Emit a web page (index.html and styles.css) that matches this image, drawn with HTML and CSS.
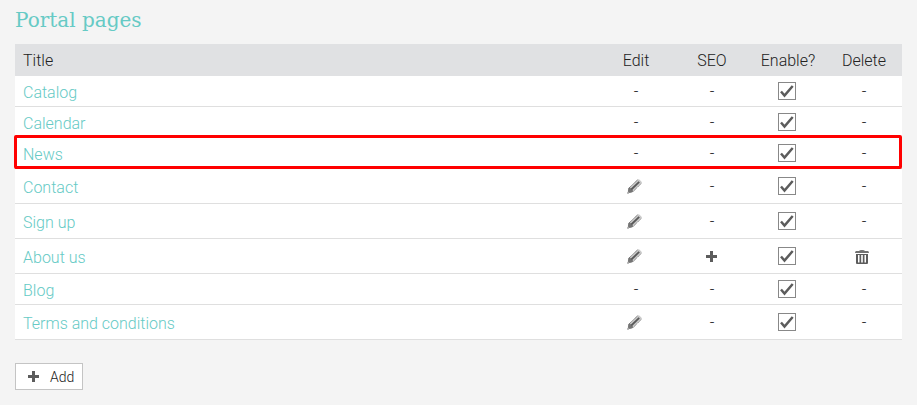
FILE: index.html
```
<!DOCTYPE html>
<html lang="en">
<head>
<meta charset="utf-8">
<title>Portal pages</title>
<link rel="stylesheet" href="styles.css">
</head>
<body>
<svg class="sprites" aria-hidden="true">
  <symbol id="pencil" viewBox="0 0 15 15">
    <path d="M0.5 14.2 1.2 9.500 10.600 .5Q11.6 -.2 12.600 .7L14.3 2.4Q15.2 3.400 14.400 4.300L5.2 13.2Z" fill="#cacaca"/>
    <path d="M1.2 9.500 2.6 8.300 6.400 12 5.2 13.2 2.5 14 1 12.6Z" fill="#757575"/>
    <path d="M4.300 10.500 12.2 2.900" stroke="#585858" stroke-width="1.800"/>
    <path d="M2.2 8.800 10.800 .7M6 12.600 14.3 4.500" stroke="#707070" stroke-width="1" stroke-dasharray="1 .6"/>
    <path d="M0 14H2" stroke="#888"/>
  </symbol>
  <symbol id="plus" viewBox="0 0 11 11">
    <path d="M4 0H7V4H11V7H7V11H4V7H0V4H4Z" fill="#5c5c5c"/>
  </symbol>
  <symbol id="trash" viewBox="0 0 14 14">
    <path d="M4 1Q4.500 0 7 0T10 1H13Q14 1.500 14 3H0Q0 1.500 1 1Z" fill="#707070"/>
    <path d="M1 4H13V13Q13 14 12 14H2Q1 14 1 13ZM3 5V12.500H4.500V5ZM6.200 5V12.500H7.800V5ZM9.500 5V12.500H11V5Z" fill="#5c5c5c" fill-rule="evenodd"/>
  </symbol>
</svg>
<main>
  <h1>Portal pages</h1>
  <table>
    <thead>
      <tr><th class="title" scope="col">Title</th><th scope="col">Edit</th><th scope="col">SEO</th><th scope="col">Enable?</th><th scope="col">Delete</th></tr>
    </thead>
    <tbody>
      <tr><td class="title"><a href="#">Catalog</a></td><td>-</td><td>-</td><td class="icon"><input type="checkbox" aria-label="Enable Catalog" checked></td><td>-</td></tr>
      <tr><td class="title"><a href="#">Calendar</a></td><td>-</td><td>-</td><td class="icon"><input type="checkbox" aria-label="Enable Calendar" checked></td><td>-</td></tr>
      <tr class="marked"><td class="title"><a href="#">News</a></td><td>-</td><td>-</td><td class="icon"><input type="checkbox" aria-label="Enable News" checked></td><td>-</td></tr>
      <tr class="editable"><td class="title"><a href="#">Contact</a></td><td class="icon"><button class="tool" aria-label="Edit Contact"><svg class="pencil"><use href="#pencil"/></svg></button></td><td>-</td><td class="icon"><input type="checkbox" aria-label="Enable Contact" checked></td><td>-</td></tr>
      <tr class="editable"><td class="title"><a href="#">Sign up</a></td><td class="icon"><button class="tool" aria-label="Edit Sign up"><svg class="pencil"><use href="#pencil"/></svg></button></td><td>-</td><td class="icon"><input type="checkbox" aria-label="Enable Sign up" checked></td><td>-</td></tr>
      <tr class="editable"><td class="title"><a href="#">About us</a></td><td class="icon"><button class="tool" aria-label="Edit About us"><svg class="pencil"><use href="#pencil"/></svg></button></td><td class="icon"><button class="tool" aria-label="Add SEO for About us"><svg class="plus"><use href="#plus"/></svg></button></td><td class="icon"><input type="checkbox" aria-label="Enable About us" checked></td><td class="icon"><button class="tool" aria-label="Delete About us"><svg class="trash"><use href="#trash"/></svg></button></td></tr>
      <tr><td class="title"><a href="#">Blog</a></td><td>-</td><td>-</td><td class="icon"><input type="checkbox" aria-label="Enable Blog" checked></td><td>-</td></tr>
      <tr class="editable"><td class="title"><a href="#">Terms and conditions</a></td><td class="icon"><button class="tool" aria-label="Edit Terms and conditions"><svg class="pencil"><use href="#pencil"/></svg></button></td><td>-</td><td class="icon"><input type="checkbox" aria-label="Enable Terms and conditions" checked></td><td>-</td></tr>
    </tbody>
  </table>
  <button class="add"><svg class="plus"><use href="#plus"/></svg>Add</button>
</main>
</body>
</html>
```
FILE: styles.css
```
* { box-sizing: border-box; }
body {
  margin: 0;
  background: #f4f4f4;
  color: #222;
  font: 300 16px/20px Roboto, sans-serif;
}
.sprites { display: none; }
main { padding: 8px 15px 14px; }
h1 {
  margin: 0 0 12px;
  color: #66cac5;
  font: 400 20px/24px "Roboto Slab", "DejaVu Serif", serif;
}
table {
  width: 100%;
  border-collapse: separate;
  border-spacing: 0;
  table-layout: fixed;
}
th, td {
  width: 76px;
  height: 31px;
  padding: 2px 0 0;
  text-align: center;
  vertical-align: middle;
  font-weight: 300;
}
th { height: 32px; background: #e0e1e3; }
td { background: #fff; border-bottom: 1px solid #dfdfdf; }
.editable td { height: 35px; }
.title { width: auto; padding: 2px 8px 0; text-align: left; }
td.title { padding-top: 4px; }
.icon { padding: 0 2px 0 0; }
a { color: #66cac5; text-decoration: none; }
.marked { position: relative; }
.marked .title::after {
  content: "";
  position: absolute;
  inset: -3px 0 0 -1px;
  border: 3px solid #f00;
  border-radius: 2px;
  pointer-events: none;
}
input {
  appearance: none;
  display: block;
  width: 18px;
  height: 18px;
  margin: 0 auto;
  border: 1px solid #888;
  background: #fff url("data:image/svg+xml,%3Csvg xmlns='http://www.w3.org/2000/svg' viewBox='0 0 16 16'%3E%3Cpath d='M2 8.500 5.500 12.500 13.700 3' fill='none' stroke='%235c5c5c' stroke-width='2.500'/%3E%3C/svg%3E");
}
.tool {
  display: block;
  margin: 0 auto;
  padding: 0;
  border: 0;
  background: none;
}
svg { display: block; }
.pencil, .trash { margin: 1px 2px 0 0; }
.pencil { width: 15px; height: 15px; }
.plus { width: 11px; height: 11px; }
.trash { width: 14px; height: 14px; }
.add {
  display: flex;
  align-items: center;
  gap: 11px;
  height: 27px;
  margin-top: 23px;
  padding: 0 8px 0 12px;
  border: 1px solid #c4c4c4;
  background: #fff;
  color: #222;
  font: 300 14px/20px Roboto, sans-serif;
}
```
